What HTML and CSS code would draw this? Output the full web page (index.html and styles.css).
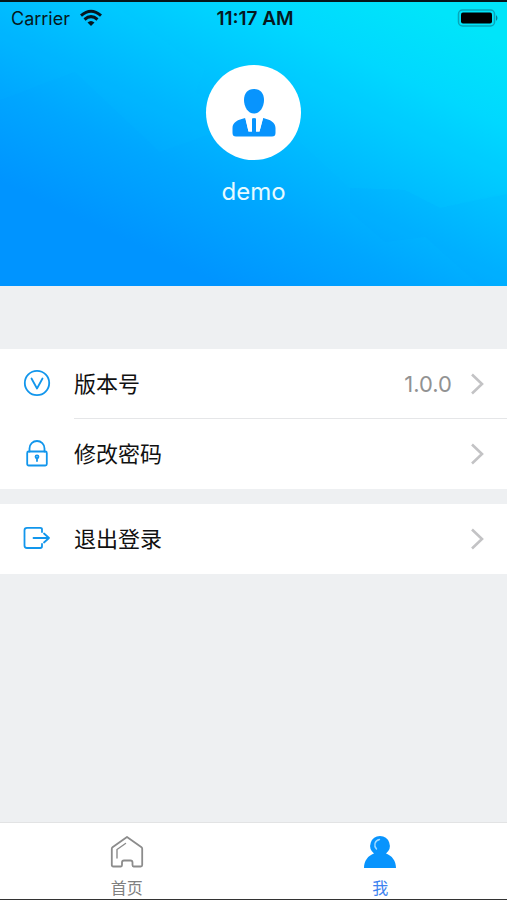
FILE: index.html
```html
<!DOCTYPE html>
<html lang="zh-CN">
<head>
<meta charset="utf-8">
<meta name="viewport" content="width=device-width, initial-scale=1">
<title>我</title>
<link rel="stylesheet" href="styles.css">
</head>
<body>
<div class="app">
  <header class="hero">
    <svg class="facets" viewBox="0 0 507 284" preserveAspectRatio="none" aria-hidden="true">
      <path class="light" d="M110 0L205 68 195 90 245 120 160 150 75 70 0 98V0Z"/>
      <path class="light" d="M300 70L365 72 430 110 507 140V190L440 206 405 188 350 186 300 140Z"/>
      <path class="dark" d="M350 186L405 188 440 206 507 192V284H480L425 235 385 240 350 210Z"/>
    </svg>
    <div class="status">
      <div class="carrier">
        <span>Carrier</span>
        <svg width="24" height="18" viewBox="0 0 24 18" aria-hidden="true">
          <g fill="none" stroke="#061820" stroke-width="3">
            <path d="M2 6.600Q12 -2.200 22 6.600"/>
            <path d="M5.500 10.500Q12 4.800 18.500 10.500"/>
          </g>
          <path fill="#061820" d="M8.500 13.500Q12 10.500 15.500 13.500L12 17Z"/>
        </svg>
      </div>
      <time>11:17 AM</time>
      <svg class="battery" width="42" height="18" viewBox="0 0 42 18" aria-hidden="true">
        <rect x="1.500" y="1" width="36" height="16" rx="4" fill="none" stroke="#08a5b8" stroke-width="1.500"/>
        <rect x="4" y="3.500" width="31" height="11" rx="2"/>
        <path fill="#087f90" d="M39 6Q42 9 39 12Z"/>
      </svg>
    </div>
    <div class="profile">
      <div class="avatar">
        <svg width="44" height="48" viewBox="0 0 44 48" fill="#0894fd" aria-hidden="true">
          <path d="M22 0C28.500 0 32 4.500 32 11C32 18 28 24.500 22 24.500S12 18 12 11C12 4.500 15.500 0 22 0Z"/>
          <path d="M13.200 29L16.500 42.500H27.500L31.200 29C38 30.500 43.500 33.500 43.500 39V44Q43.500 47.500 40 47.500H4Q.500 47.500 .500 44V39C.500 33.500 6 30.500 13.200 29Z"/>
          <path fill="#fff" d="M13.200 28H20.800L20 30.500V42.500H16.500ZM31.200 28H23.200L24 30.500V42.500H27.500Z"/>
          <path d="M20 29.500Q22 28.500 24 29.500V43H20Z"/>
        </svg>
      </div>
      <h1>demo</h1>
    </div>
  </header>

  <main class="menu">
    <div class="group">
      <button class="row divided" type="button">
        <svg class="icon" viewBox="0 0 28 28" aria-hidden="true"><circle cx="14" cy="14" r="12.200"/><path d="M8.500 9.500L14 19.500 19.500 9.500"/></svg>
        <span class="label">版本号</span>
        <span class="value">1.0.0</span>
        <svg class="chevron" viewBox="0 0 14 22" aria-hidden="true"><path d="M2 1.500L12 11 2 20.500"/></svg>
      </button>
      <button class="row" type="button">
        <svg class="icon" viewBox="0 0 28 28" aria-hidden="true"><rect x="4.200" y="12.500" width="19.600" height="14" rx="1.500"/><path d="M6.500 12.500V9.500A7.500 7.500 0 0 1 21.500 9.500V12.500M14 19V22"/><circle cx="14" cy="17.800" r="1.500"/></svg>
        <span class="label">修改密码</span>
        <svg class="chevron" viewBox="0 0 14 22" aria-hidden="true"><path d="M2 1.500L12 11 2 20.500"/></svg>
      </button>
    </div>
    <div class="group">
      <button class="row" type="button">
        <svg class="icon" viewBox="0 0 28 28" aria-hidden="true"><path d="M19 8V5.500Q19 3.800 17.300 3.800H4Q1.500 3.800 1.500 6.300V21.500Q1.500 24 4 24H17.300Q19 24 19 22.300V20M10.500 14H26M21 9.500L26 14 21 18.500"/></svg>
        <span class="label">退出登录</span>
        <svg class="chevron" viewBox="0 0 14 22" aria-hidden="true"><path d="M2 1.500L12 11 2 20.500"/></svg>
      </button>
    </div>
  </main>

  <nav class="tabs">
    <a href="#home">
      <svg width="34" height="34" viewBox="0 0 34 34" fill="none" stroke="#8c8c8c" stroke-width="1.800" stroke-linejoin="round" stroke-linecap="round" aria-hidden="true">
        <path d="M17 2L31.500 12.200Q32.200 12.700 32.200 13.700V30Q32.200 31.500 30.700 31.500H23.500Q22.500 31.500 22.500 30V27.500Q22.500 25.500 20.500 25.500H14Q12 25.500 12 27.500V30Q12 31.500 11 31.500H3.300Q1.800 31.500 1.800 30V13.700Q1.800 12.700 2.500 12.200Z"/>
        <path stroke-width="1.400" d="M7 23V14.500L15.500 8.500"/>
      </svg>
      <span>首页</span>
    </a>
    <a class="active" href="#me" aria-current="page">
      <svg width="34" height="34" viewBox="0 0 34 34" aria-hidden="true">
        <path fill="#0894fd" d="M17 1A9.800 9.800 0 0 1 23 18.500C29 20.500 33 26 33 33H1C1 26 5 20.500 11 18.500A9.800 9.800 0 0 1 17 1Z"/>
        <path fill="none" stroke="#a4dcff" stroke-width="1.400" stroke-linecap="round" d="M16.500 4.500C11.500 5.500 10.500 10.500 13.500 14"/>
      </svg>
      <span>我</span>
    </a>
  </nav>
</div>
</body>
</html>
```
FILE: styles.css
```css
* {
  box-sizing: border-box;
}

body {
  margin: 0;
  background: #eef0f2;
  font-family: Inter, "Noto Sans CJK SC", sans-serif;
  color: #111;
}

.app {
  display: flex;
  flex-direction: column;
  min-height: 100vh;
  border-top: 2px solid #06151a;
  border-bottom: 1px solid #333;
}

.hero {
  position: relative;
  height: 284px;
  background: linear-gradient(25deg, #0094ff 20%, #00a6ff 38%, #00bfff 57%, #00d8ff 76%, #00e5fa 92%);
}

.facets {
  position: absolute;
  inset: 0;
  width: 100%;
  height: 100%;
}

.facets .light {
  fill: rgba(0, 225, 255, 0.04);
}

.facets .dark {
  fill: rgba(0, 130, 255, 0.05);
}

.status {
  position: relative;
  display: grid;
  grid-template-columns: 1fr auto 1fr;
  align-items: center;
  height: 32px;
  padding: 0 8px 0 11px;
  font-size: 18px;
  color: #061820;
}

.status time {
  font-size: 19px;
  font-weight: 600;
}

.carrier {
  display: flex;
  align-items: center;
  gap: 9px;
}

.battery {
  justify-self: end;
}

.profile {
  position: relative;
  display: flex;
  flex-direction: column;
  align-items: center;
  gap: 16px;
  padding-top: 31px;
}

.avatar {
  display: grid;
  place-items: center;
  width: 95px;
  height: 95px;
  border-radius: 50%;
  background: #fff;
}

.profile h1 {
  margin: 0;
  font-size: 24px;
  font-weight: 400;
  line-height: 32px;
  color: #e6faff;
}

.menu {
  display: flex;
  flex: 1;
  flex-direction: column;
  gap: 15px;
  padding-top: 63px;
}

.group {
  background: #fff;
}

.row {
  display: flex;
  align-items: center;
  width: 100%;
  height: 70px;
  padding: 0 23px;
  border: 0;
  background: none;
  font: inherit;
  color: inherit;
  text-align: left;
}

.row.divided {
  background: linear-gradient(#e5e6e8, #e5e6e8) 74px 100% / 100% 1px no-repeat;
}

.icon {
  width: 28px;
  height: 28px;
  margin: 0 23px 3px 0;
  fill: none;
  stroke: #1296ec;
  stroke-width: 1.8px;
  stroke-linecap: round;
  stroke-linejoin: round;
}

.label {
  flex: 1;
  font-size: 22px;
  line-height: 32px;
}

.value {
  margin-right: 18px;
  font-size: 22px;
  color: #929292;
}

.chevron {
  width: 14px;
  height: 22px;
  fill: none;
  stroke: #c3c3c5;
  stroke-width: 2.6px;
}

.tabs {
  display: flex;
  height: 77px;
  border-top: 1px solid #e2e3e4;
  background: #fff;
}

.tabs a {
  display: flex;
  flex: 1;
  flex-direction: column;
  align-items: center;
  gap: 9px;
  padding-top: 12px;
  font-size: 16px;
  line-height: 20px;
  text-decoration: none;
  color: #808080;
}

.tabs svg {
  flex-shrink: 0;
}

.tabs .active {
  color: #3e83f0;
}
```
